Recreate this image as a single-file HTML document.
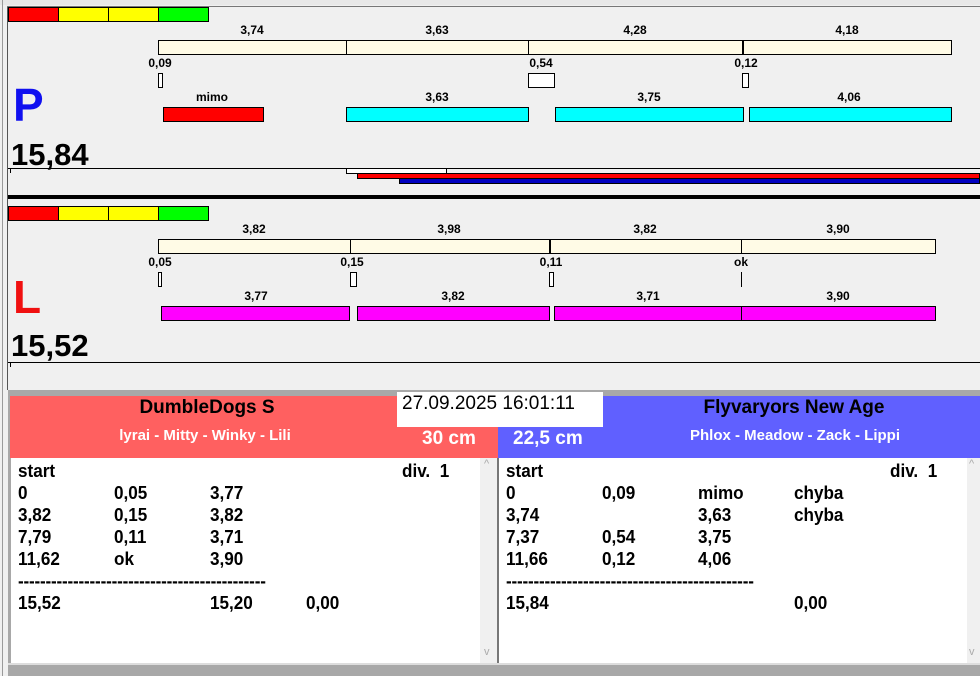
<!DOCTYPE html>
<html><head><meta charset="utf-8"><style>
*{margin:0;padding:0;box-sizing:border-box}
body{width:980px;height:676px;overflow:hidden;background:#f0f0f0;position:relative;font-family:"Liberation Sans",Arial,sans-serif}
div{position:absolute}
.b{border:1px solid #000}
.lbl{font-size:12px;font-weight:bold;color:#000;transform:translateX(-50%);white-space:nowrap;line-height:14px}
.cr{background:#fffbe6}
.cy{background:#00ffff}
.mg{background:#ff00ff}
.t{font-size:18px;font-weight:bold;line-height:22px;white-space:nowrap;color:#000;transform:scaleX(0.95);transform-origin:left}
</style></head><body>
<div style="left:0;top:0;width:980px;height:5px;background:#e8e8e8"></div>
<div style="left:2px;top:0;width:1px;height:676px;background:#9a9a9a"></div>
<div style="left:7px;top:6px;width:1px;height:384px;background:#555"></div>
<div style="left:7px;top:6px;width:973px;height:1px;background:#777"></div>

<div class="b" style="left:8px;top:7px;width:51px;height:15px;background:#f00"></div>
<div class="b" style="left:58px;top:7px;width:51px;height:15px;background:#ff0"></div>
<div class="b" style="left:108px;top:7px;width:51px;height:15px;background:#ff0"></div>
<div class="b" style="left:158px;top:7px;width:51px;height:15px;background:#0f0"></div>

<div class="lbl" style="left:252px;top:23px">3,74</div>
<div class="lbl" style="left:437px;top:23px">3,63</div>
<div class="lbl" style="left:635px;top:23px">4,28</div>
<div class="lbl" style="left:847px;top:23px">4,18</div>
<div class="b cr" style="left:158px;top:40px;width:189px;height:15px"></div>
<div class="b cr" style="left:346px;top:40px;width:183px;height:15px"></div>
<div class="b cr" style="left:528px;top:40px;width:215px;height:15px"></div>
<div class="b cr" style="left:742px;top:40px;width:210px;height:15px;border-left-width:2px"></div>

<div class="lbl" style="left:160px;top:56px">0,09</div>
<div class="lbl" style="left:541px;top:56px">0,54</div>
<div class="lbl" style="left:746px;top:56px">0,12</div>
<div class="b" style="left:158px;top:73px;width:5px;height:15px;background:#fff"></div>
<div class="b" style="left:528px;top:73px;width:27px;height:15px;background:#fff"></div>
<div class="b" style="left:742px;top:73px;width:7px;height:15px;background:#fff"></div>

<div style="left:13px;top:80px;font-size:46px;font-weight:bold;color:#1010f0;line-height:50px">P</div>
<div class="lbl" style="left:212px;top:90px">mimo</div>
<div class="lbl" style="left:437px;top:90px">3,63</div>
<div class="lbl" style="left:649px;top:90px">3,75</div>
<div class="lbl" style="left:849px;top:90px">4,06</div>
<div class="b" style="left:163px;top:107px;width:101px;height:15px;background:#f00"></div>
<div class="b cy" style="left:346px;top:107px;width:183px;height:15px"></div>
<div class="b cy" style="left:555px;top:107px;width:189px;height:15px"></div>
<div class="b cy" style="left:749px;top:107px;width:203px;height:15px"></div>

<div style="left:11px;top:137px;font-size:31px;font-weight:bold;line-height:36px">15,84</div>
<div style="left:8px;top:168px;width:972px;height:1px;background:#000"></div>
<div style="left:10px;top:168px;width:1px;height:5px;background:#000"></div>
<div class="b" style="left:346px;top:168px;width:101px;height:6px;background:#fff"></div>
<div class="b" style="left:357px;top:173px;width:623px;height:6px;background:#f00"></div>
<div class="b" style="left:399px;top:178px;width:581px;height:6px;background:#0000c0"></div>
<div style="left:8px;top:195px;width:972px;height:4px;background:#000"></div>

<div class="b" style="left:8px;top:206px;width:51px;height:15px;background:#f00"></div>
<div class="b" style="left:58px;top:206px;width:51px;height:15px;background:#ff0"></div>
<div class="b" style="left:108px;top:206px;width:51px;height:15px;background:#ff0"></div>
<div class="b" style="left:158px;top:206px;width:51px;height:15px;background:#0f0"></div>

<div class="lbl" style="left:254px;top:222px">3,82</div>
<div class="lbl" style="left:449px;top:222px">3,98</div>
<div class="lbl" style="left:645px;top:222px">3,82</div>
<div class="lbl" style="left:838px;top:222px">3,90</div>
<div class="b cr" style="left:158px;top:239px;width:193px;height:15px"></div>
<div class="b cr" style="left:350px;top:239px;width:200px;height:15px"></div>
<div class="b cr" style="left:549px;top:239px;width:193px;height:15px;border-left-width:2px"></div>
<div class="b cr" style="left:741px;top:239px;width:195px;height:15px"></div>

<div class="lbl" style="left:160px;top:255px">0,05</div>
<div class="lbl" style="left:352px;top:255px">0,15</div>
<div class="lbl" style="left:551px;top:255px">0,11</div>
<div class="lbl" style="left:741px;top:255px">ok</div>
<div class="b" style="left:158px;top:272px;width:4px;height:15px;background:#fff"></div>
<div class="b" style="left:350px;top:272px;width:7px;height:15px;background:#fff"></div>
<div class="b" style="left:549px;top:272px;width:5px;height:15px;background:#fff"></div>
<div style="left:741px;top:272px;width:1px;height:15px;background:#000"></div>

<div style="left:13px;top:272px;font-size:46px;font-weight:bold;color:#f01010;line-height:50px">L</div>
<div class="lbl" style="left:256px;top:289px">3,77</div>
<div class="lbl" style="left:453px;top:289px">3,82</div>
<div class="lbl" style="left:648px;top:289px">3,71</div>
<div class="lbl" style="left:838px;top:289px">3,90</div>
<div class="b mg" style="left:161px;top:306px;width:189px;height:15px"></div>
<div class="b mg" style="left:357px;top:306px;width:193px;height:15px"></div>
<div class="b mg" style="left:554px;top:306px;width:188px;height:15px"></div>
<div class="b mg" style="left:741px;top:306px;width:195px;height:15px"></div>

<div style="left:11px;top:328px;font-size:31px;font-weight:bold;line-height:36px">15,52</div>
<div style="left:8px;top:362px;width:972px;height:1px;background:#000"></div>
<div style="left:10px;top:362px;width:1px;height:5px;background:#000"></div>

<div style="left:8px;top:390px;width:972px;height:7px;background:#a8a8a8"></div>
<div style="left:8px;top:390px;width:3px;height:286px;background:#a8a8a8"></div>
<div style="left:10px;top:396px;width:488px;height:62px;background:#ff6060"></div>
<div style="left:498px;top:396px;width:482px;height:62px;background:#6060ff"></div>
<div style="left:207px;top:396px;transform:translateX(-50%);font-size:19px;font-weight:bold;line-height:24px;white-space:nowrap">DumbleDogs S</div>
<div style="left:205px;top:427px;transform:translateX(-50%);font-size:15px;font-weight:bold;color:#fff;line-height:18px;white-space:nowrap">lyrai - Mitty - Winky - Lili</div>
<div style="left:794px;top:396px;transform:translateX(-50%);font-size:19px;font-weight:bold;line-height:24px;white-space:nowrap">Flyvaryors New Age</div>
<div style="left:795px;top:427px;transform:translateX(-50%);font-size:15px;font-weight:bold;color:#fff;line-height:18px;white-space:nowrap">Phlox - Meadow - Zack - Lippi</div>
<div style="left:397px;top:392px;width:206px;height:35px;background:#fff"></div>
<div style="left:402px;top:392px;font-size:19px;line-height:24px;white-space:nowrap">27.09.2025 16:01:11</div>
<div style="left:422px;top:428px;font-size:19px;font-weight:bold;color:#fff;line-height:22px">30 cm</div>
<div style="left:513px;top:428px;font-size:19px;font-weight:bold;color:#fff;line-height:22px">22,5 cm</div>

<div style="left:11px;top:458px;width:469px;height:207px;background:#fff"></div>
<div style="left:480px;top:458px;width:17px;height:207px;background:#f0f0f0;color:#aaa;font-size:11px"><span style="position:absolute;left:4px;top:0">^</span><span style="position:absolute;left:4px;top:188px">v</span></div>
<div style="left:497px;top:458px;width:2px;height:207px;background:#777"></div>
<div style="left:499px;top:458px;width:468px;height:207px;background:#fff"></div>
<div style="left:967px;top:458px;width:13px;height:207px;background:#f0f0f0;color:#aaa;font-size:11px"><span style="position:absolute;left:2px;top:0">^</span><span style="position:absolute;left:2px;top:188px">v</span></div>
<div style="left:8px;top:665px;width:972px;height:11px;background:#a8a8a8"></div>
<div style="left:8px;top:663px;width:972px;height:2px;background:#ddd"></div>

<div class="t" style="left:18px;top:460px">start</div><div class="t" style="left:402px;top:460px">div.&nbsp; 1</div>
<div class="t" style="left:18px;top:482px">0</div><div class="t" style="left:114px;top:482px">0,05</div><div class="t" style="left:210px;top:482px">3,77</div>
<div class="t" style="left:18px;top:504px">3,82</div><div class="t" style="left:114px;top:504px">0,15</div><div class="t" style="left:210px;top:504px">3,82</div>
<div class="t" style="left:18px;top:526px">7,79</div><div class="t" style="left:114px;top:526px">0,11</div><div class="t" style="left:210px;top:526px">3,71</div>
<div class="t" style="left:18px;top:548px">11,62</div><div class="t" style="left:114px;top:548px">ok</div><div class="t" style="left:210px;top:548px">3,90</div>
<div class="t" style="left:18px;top:570px;letter-spacing:-0.2px">---------------------------------------------</div>
<div class="t" style="left:18px;top:592px">15,52</div><div class="t" style="left:210px;top:592px">15,20</div><div class="t" style="left:306px;top:592px">0,00</div>

<div class="t" style="left:506px;top:460px">start</div><div class="t" style="left:890px;top:460px">div.&nbsp; 1</div>
<div class="t" style="left:506px;top:482px">0</div><div class="t" style="left:602px;top:482px">0,09</div><div class="t" style="left:698px;top:482px">mimo</div><div class="t" style="left:794px;top:482px">chyba</div>
<div class="t" style="left:506px;top:504px">3,74</div><div class="t" style="left:698px;top:504px">3,63</div><div class="t" style="left:794px;top:504px">chyba</div>
<div class="t" style="left:506px;top:526px">7,37</div><div class="t" style="left:602px;top:526px">0,54</div><div class="t" style="left:698px;top:526px">3,75</div>
<div class="t" style="left:506px;top:548px">11,66</div><div class="t" style="left:602px;top:548px">0,12</div><div class="t" style="left:698px;top:548px">4,06</div>
<div class="t" style="left:506px;top:570px;letter-spacing:-0.2px">---------------------------------------------</div>
<div class="t" style="left:506px;top:592px">15,84</div><div class="t" style="left:794px;top:592px">0,00</div>
</body></html>
